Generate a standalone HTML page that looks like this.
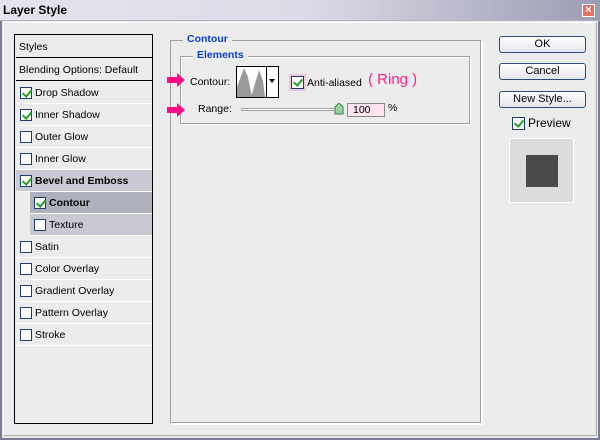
<html><head><style>
*{margin:0;padding:0;box-sizing:border-box}
body{width:600px;height:440px;background:#ECECEC;font-family:"Liberation Sans",sans-serif;font-size:10.5px;color:#000;position:relative;overflow:hidden}
.a{position:absolute}
.cb{position:absolute;width:12px;height:12px;border:1px solid #1c3e6e;background:#fff}
.cb.c::after{content:"";position:absolute;left:3px;top:0px;width:4px;height:7px;border:solid #21a121;border-width:0 2px 2px 0;transform:rotate(40deg)}
.row{position:absolute;left:1px;width:136px;height:22px;border-bottom:1px solid #fff}
.row span{position:absolute;left:19px;top:5px}
.row .cb{left:4px;top:5px}
.btn{position:absolute;left:499px;width:87px;height:17px;border:1px solid #2a4c86;border-radius:3px;background:linear-gradient(#fff,#e4e4ec);text-align:center;font-size:11px;line-height:15px}
.leg{position:absolute;background:#ECECEC;color:#0a3fd0;font-weight:bold;padding:0 4px;font-size:10.5px}
</style></head><body>
<div class="a" style="left:0;top:0;width:600px;height:440px;border:2px solid #7c7e96;border-top:none"></div>
<div class="a" style="left:0;top:0;width:600px;height:21px;background:linear-gradient(90deg,#e4e4ee,#dcdce8 50%,#9c9cb4);border-bottom:1px solid #b0b0c0"></div>
<div class="a" style="left:3px;top:3px;font-weight:bold;font-size:12px">Layer Style</div>
<div class="a" style="left:582px;top:4px;width:13px;height:13px;background:#e87060;border:1px solid #fff;color:#fff;font-size:11px;line-height:11px;text-align:center;font-weight:bold">×</div>
<div class="a" style="left:3px;top:22px;width:594px;height:414px;border:1px solid #fff;border-right-color:#aaa;border-bottom-color:#aaa"></div>

<div class="a" style="left:14px;top:34px;width:139px;height:390px;border:1px solid #000;background:#ECECEC">
 <div class="row" style="top:0;height:23px;border-bottom:1px solid #000"><span style="left:3px;top:6px">Styles</span></div>
 <div class="row" style="top:24px;border-bottom:1px solid #000"><span style="left:3px">Blending Options: Default</span></div>
 <div class="row" style="top:47px"><div class="cb c"></div><span>Drop Shadow</span></div>
 <div class="row" style="top:69px"><div class="cb c"></div><span>Inner Shadow</span></div>
 <div class="row" style="top:91px"><div class="cb"></div><span>Outer Glow</span></div>
 <div class="row" style="top:113px"><div class="cb"></div><span>Inner Glow</span></div>
 <div class="row" style="top:135px;background:#c8c9d2"><div class="cb c"></div><span style="font-weight:bold">Bevel and Emboss</span></div>
 <div class="row" style="top:157px;left:15px;width:122px;background:#aeb0bd"><div class="cb c"></div><span style="font-weight:bold">Contour</span></div>
 <div class="row" style="top:179px;left:15px;width:122px;background:#c8c9d2"><div class="cb"></div><span>Texture</span></div>
 <div class="row" style="top:201px"><div class="cb"></div><span>Satin</span></div>
 <div class="row" style="top:223px"><div class="cb"></div><span>Color Overlay</span></div>
 <div class="row" style="top:245px"><div class="cb"></div><span>Gradient Overlay</span></div>
 <div class="row" style="top:267px"><div class="cb"></div><span>Pattern Overlay</span></div>
 <div class="row" style="top:289px"><div class="cb"></div><span>Stroke</span></div>
</div>

<div class="a" style="left:170px;top:40px;width:312px;height:384px;border:1px solid #a0a0a0;border-right-color:#fff;border-bottom-color:#fff;box-shadow:inset -1px -1px 0 #a0a0a0,1px 1px 0 #fff"></div>
<div class="leg" style="left:183px;top:33px">Contour</div>
<div class="a" style="left:180px;top:56px;width:290px;height:68px;border:1px solid #a0a0a0;box-shadow:1px 1px 0 #fff,inset 1px 1px 0 #fff"></div>
<div class="leg" style="left:193px;top:49px">Elements</div>

<svg class="a" style="left:167px;top:73px" width="20" height="14"><path d="M0 4h10V0l8 7-8 7v-4H0z" fill="#ff0a84"/></svg>
<svg class="a" style="left:167px;top:103px" width="20" height="14"><path d="M0 4h10V0l8 7-8 7v-4H0z" fill="#ff0a84"/></svg>
<div class="a" style="left:190px;top:76px">Contour:</div>
<div class="a" style="left:236px;top:66px;width:43px;height:32px;border:1px solid #000;background:#fff">
<svg width="30" height="30"><path d="M0 30L0 20L7 1L11 10L15 30ZM14 30L22 3L26 14L28 30Z" fill="#9a9a9a"/></svg>
<div class="a" style="left:29px;top:0;width:1px;height:30px;background:#000"></div>
<div class="a" style="left:32px;top:12px;border:3px solid transparent;border-top:4px solid #000"></div>
</div>
<div class="a" style="left:289px;top:74px;width:17px;height:17px;background:#f0c4dc"></div>
<div class="cb c" style="left:291px;top:76px;width:13px;height:13px"></div>
<div class="a" style="left:307px;top:77px">Anti-aliased</div>
<div class="a" style="left:368px;top:71px;color:#ff2090;font-size:15px">( Ring )</div>
<div class="a" style="left:198px;top:103px">Range:</div>
<div class="a" style="left:241px;top:108px;width:100px;height:3px;border:1px solid #a0a0a0;border-radius:2px;background:#fff"></div>
<svg class="a" style="left:334px;top:103px" width="10" height="12"><path d="M1 4L5 0L9 4V11H1Z" fill="#9fd0a0" stroke="#2a8a3a"/></svg>
<div class="a" style="left:347px;top:103px;width:38px;height:14px;border:1px solid #888;background:#fde3ef;padding-left:5px;line-height:12px">100</div>
<div class="a" style="left:388px;top:102px">%</div>

<div class="btn" style="top:36px">OK</div>
<div class="btn" style="top:63px">Cancel</div>
<div class="btn" style="top:91px">New Style...</div>
<div class="cb c" style="left:512px;top:117px;width:13px;height:13px"></div>
<div class="a" style="left:528px;top:116px;font-size:12px">Preview</div>
<div class="a" style="left:509px;top:138px;width:65px;height:65px;background:#dcdcdc;border:1px solid #fff"></div>
<div class="a" style="left:526px;top:155px;width:32px;height:32px;background:#4a4a4a"></div>
</body></html>
